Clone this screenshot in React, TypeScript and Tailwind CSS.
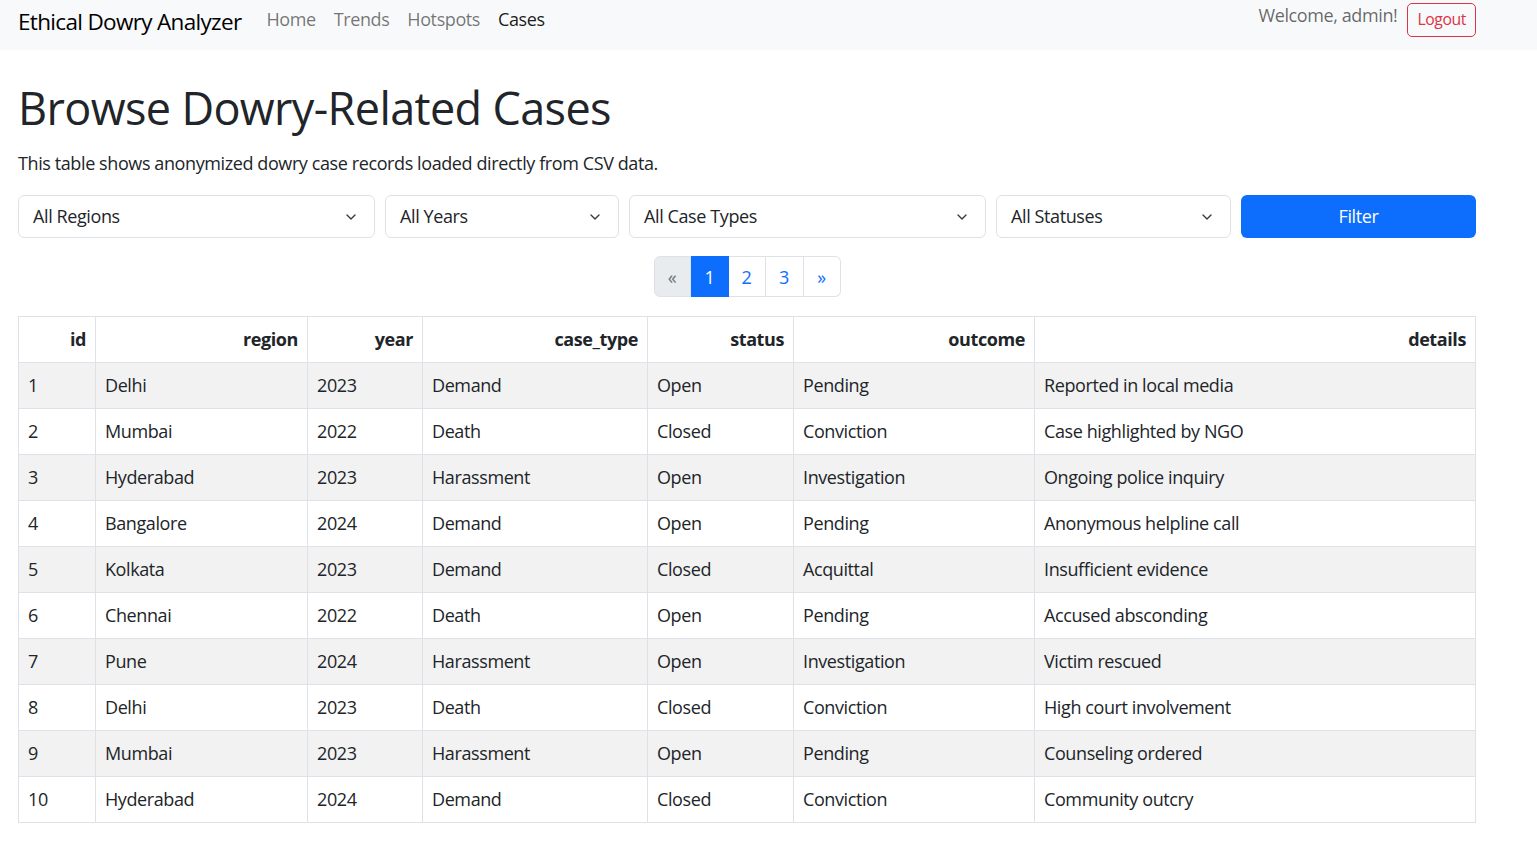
import { ChevronDown } from "lucide-react";

const CASES = [
  { id: 1, region: "Delhi", year: 2023, caseType: "Demand", status: "Open", outcome: "Pending", details: "Reported in local media" },
  { id: 2, region: "Mumbai", year: 2022, caseType: "Death", status: "Closed", outcome: "Conviction", details: "Case highlighted by NGO" },
  { id: 3, region: "Hyderabad", year: 2023, caseType: "Harassment", status: "Open", outcome: "Investigation", details: "Ongoing police inquiry" },
  { id: 4, region: "Bangalore", year: 2024, caseType: "Demand", status: "Open", outcome: "Pending", details: "Anonymous helpline call" },
  { id: 5, region: "Kolkata", year: 2023, caseType: "Demand", status: "Closed", outcome: "Acquittal", details: "Insufficient evidence" },
  { id: 6, region: "Chennai", year: 2022, caseType: "Death", status: "Open", outcome: "Pending", details: "Accused absconding" },
  { id: 7, region: "Pune", year: 2024, caseType: "Harassment", status: "Open", outcome: "Investigation", details: "Victim rescued" },
  { id: 8, region: "Delhi", year: 2023, caseType: "Death", status: "Closed", outcome: "Conviction", details: "High court involvement" },
  { id: 9, region: "Mumbai", year: 2023, caseType: "Harassment", status: "Open", outcome: "Pending", details: "Counseling ordered" },
  { id: 10, region: "Hyderabad", year: 2024, caseType: "Demand", status: "Closed", outcome: "Conviction", details: "Community outcry" },
];

const COLUMNS = ["id", "region", "year", "case_type", "status", "outcome", "details"];
const COL_WIDTHS = [77, 212, 115, 225, 146, 241, 441];

function Select({ label, width }: { label: string; width: string }) {
  return (
    <div className={`${width} h-[43px] flex items-center justify-between rounded-[6px] border border-[#dee2e6] bg-white pl-[14px] pr-[15px] text-[18px] text-[#212529]`}>
      <span>{label}</span>
      <ChevronDown className="h-[16px] w-[16px] text-[#343a40]" strokeWidth={2} />
    </div>
  );
}

export default function App() {
  return (
    <div className="min-h-screen bg-white text-[#212529] font-['Open_Sans',sans-serif] tracking-[-0.025em]">
      {/* Navbar */}
      <nav className="h-[50px] bg-[#f8f9fa] flex items-start pl-[18px] pr-[61px]">
        <span className="mt-[5px] text-[22.5px] leading-[33px] text-black tracking-[-0.03em]">Ethical Dowry Analyzer</span>
        <div className="ml-[25px] mt-[6px] flex gap-[18px] text-[18px] leading-[27px]">
          <span className="text-black/55">Home</span>
          <span className="text-black/55">Trends</span>
          <span className="text-black/55">Hotspots</span>
          <span className="text-black/90">Cases</span>
        </div>
        <div className="ml-auto flex items-start gap-[10px]">
          <span className="mt-[2px] text-[18px] leading-[27px] text-black/60">Welcome, admin!</span>
          <button className="mt-[3px] h-[34px] rounded-[5px] border border-[#dc3545] px-[9px] text-[15.75px] text-[#dc3545]">
            Logout
          </button>
        </div>
      </nav>

      <main className="pl-[18px] w-[1476px]">
        <h1 className="mt-[31px] text-[45px] leading-[54px] font-medium tracking-[-0.014em]">Browse Dowry-Related Cases</h1>
        <p className="mt-[15px] text-[18px] leading-[27px]">
          This table shows anonymized dowry case records loaded directly from CSV data.
        </p>

        <div className="mt-[18px] flex gap-[10px]">
          <Select label="All Regions" width="w-[357px]" />
          <Select label="All Years" width="w-[234px]" />
          <Select label="All Case Types" width="w-[357px]" />
          <Select label="All Statuses" width="w-[235px]" />
          <button className="w-[235px] h-[43px] rounded-[6px] bg-[#0d6efd] text-white text-[18px]">Filter</button>
        </div>

        <div className="mt-[18px] flex justify-center">
          <div className="flex h-[41px] text-[18px] leading-none">
            <span className="w-[37px] flex items-center justify-center rounded-l-[6px] border border-[#dee2e6] bg-[#e9ecef] text-[#6c757d]">«</span>
            <span className="w-[38px] flex items-center justify-center border border-[#0d6efd] bg-[#0d6efd] text-white">1</span>
            <span className="w-[37px] flex items-center justify-center border border-l-0 border-[#dee2e6] text-[#0d6efd]">2</span>
            <span className="w-[38px] flex items-center justify-center border border-l-0 border-[#dee2e6] text-[#0d6efd]">3</span>
            <span className="w-[37px] flex items-center justify-center rounded-r-[6px] border border-l-0 border-[#dee2e6] text-[#0d6efd]">»</span>
          </div>
        </div>

        <table className="mt-[19px] w-[1458px] table-fixed border-collapse text-[18px] leading-[27px]">
          <colgroup>
            {COL_WIDTHS.map((w, i) => (
              <col key={i} style={{ width: w }} />
            ))}
          </colgroup>
          <thead>
            <tr>
              {COLUMNS.map((c) => (
                <th key={c} className="h-[46px] border border-[#dee2e6] px-[9px] text-right font-bold">
                  {c}
                </th>
              ))}
            </tr>
          </thead>
          <tbody>
            {CASES.map((row, i) => (
              <tr key={row.id} className={i % 2 === 0 ? "bg-[#f2f2f2]" : "bg-white"}>
                {[row.id, row.region, row.year, row.caseType, row.status, row.outcome, row.details].map((v, j) => (
                  <td key={j} className="h-[46px] border border-[#dee2e6] px-[9px] text-left">
                    {v}
                  </td>
                ))}
              </tr>
            ))}
          </tbody>
        </table>
      </main>
    </div>
  );
}
